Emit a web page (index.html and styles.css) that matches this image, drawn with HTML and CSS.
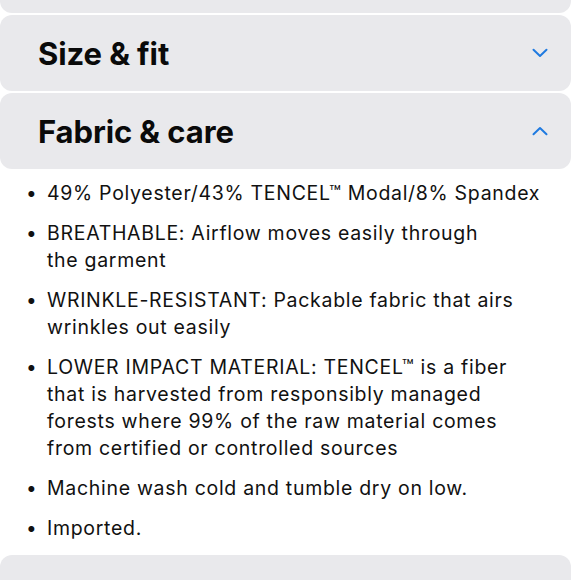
FILE: index.html
```html
<!DOCTYPE html>
<html lang="en">
<head>
<meta charset="utf-8">
<link rel="stylesheet" href="styles.css">
</head>
<body>
<div class="page">
  <div class="card stub"></div>
  <div class="card">
    <h2 class="title">Size &amp; fit</h2>
    <svg class="chev" width="16" height="10" viewBox="0 0 16 10"><path d="M1.5 1.8 L8 8 L14.5 1.8" fill="none" stroke="#1f7ae0" stroke-width="2" stroke-linecap="round" stroke-linejoin="round"/></svg>
  </div>
  <div class="card">
    <h2 class="title">Fabric &amp; care</h2>
    <svg class="chev" width="16" height="10" viewBox="0 0 16 10"><path d="M1.5 8.2 L8 2 L14.5 8.2" fill="none" stroke="#1f7ae0" stroke-width="2" stroke-linecap="round" stroke-linejoin="round"/></svg>
  </div>
  <ul class="list">
    <li>49% Polyester/43% TENCEL™ Modal/8% Spandex</li>
    <li>BREATHABLE: Airflow moves easily through the&nbsp;garment</li>
    <li>WRINKLE-RESISTANT: Packable fabric that airs wrinkles out easily</li>
    <li>LOWER IMPACT MATERIAL: TENCEL™ is a fiber that is harvested from responsibly managed forests where 99% of the raw material comes from certified or controlled sources</li>
    <li>Machine wash cold and tumble dry on low.</li>
    <li>Imported.</li>
  </ul>
  <div class="card next"></div>
</div>
</body>
</html>
```
FILE: styles.css
```css
html, body {
  margin: 0;
  background: #ffffff;
}
.page {
  width: 571px;
  display: flex;
  flex-direction: column;
  gap: 2px;
  font-family: Inter, "Noto Sans", sans-serif;
  color: #111111;
}
.card {
  background: #e9e9ec;
  border-radius: 12px;
  height: 76px;
  box-sizing: border-box;
  padding: 0 23px 0 38px;
  display: flex;
  align-items: center;
  justify-content: space-between;
}
.stub {
  height: 13px;
  border-radius: 0 0 12px 12px;
}
.title {
  margin: 0;
  font-size: 31px;
  font-weight: 700;
  color: #0a0a0a;
  letter-spacing: -0.1px;
}
.chev {
  display: block;
}
.list {
  list-style: none;
  margin: 0;
  padding: 9px 22px 11px 26px;
  font-size: 19.5px;
  line-height: 27px;
  letter-spacing: 0.7px;
}
.list li {
  display: flex;
}
.list li + li {
  margin-top: 13px;
}
.list li::before {
  content: "•";
  flex: 0 0 21px;
  font-size: 19px;
  letter-spacing: 0;
}
.next {
  height: 40px;
}
```
